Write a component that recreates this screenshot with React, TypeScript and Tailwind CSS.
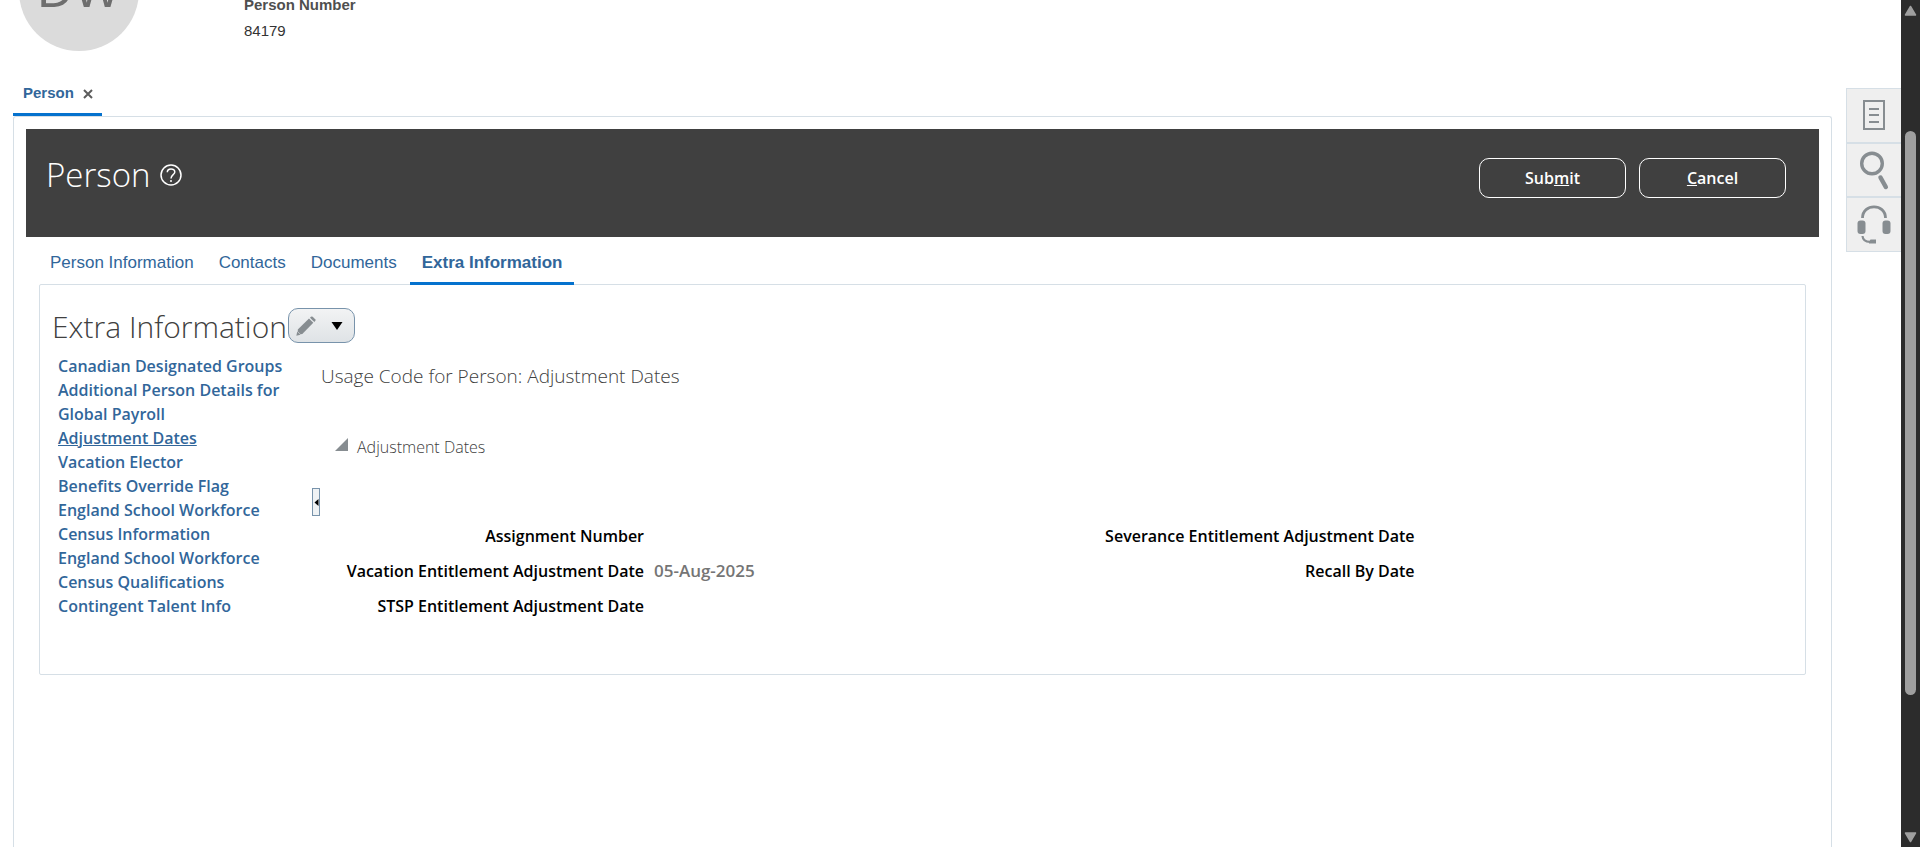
import { useState } from "react";
import type { ReactNode } from "react";

const sections = [
  "Canadian Designated Groups",
  "Additional Person Details for Global Payroll",
  "Adjustment Dates",
  "Vacation Elector",
  "Benefits Override Flag",
  "England School Workforce Census Information",
  "England School Workforce Census Qualifications",
  "Contingent Talent Info",
];

const tabs = ["Person Information", "Contacts", "Documents", "Extra Information"];

function Field({ label, value = "" }: { label: string; value?: string }) {
  return (
    <div className="grid h-[35px] grid-cols-[323px_1fr] items-center">
      <dt className="text-right font-semibold whitespace-nowrap text-black">{label}</dt>
      <dd className="pl-[10px] text-[17px] leading-[24px] font-semibold text-[#757575]">{value}</dd>
    </div>
  );
}

function HeaderButton({ children }: { children: ReactNode }) {
  return (
    <button
      type="button"
      className="h-10 w-[147px] rounded-[10px] border border-white text-[16px] font-semibold text-white"
    >
      {children}
    </button>
  );
}

function SideTab({ label, children }: { label: string; children: ReactNode }) {
  return (
    <button
      type="button"
      aria-label={label}
      className="flex h-[54px] w-[55px] items-center justify-center border-t-2 border-l border-[#d6dfe6] bg-[#efefef] first:border-t last:h-14 last:border-b"
    >
      {children}
    </button>
  );
}

function SideRail() {
  return (
    <aside className="w-[55px] shrink-0 pt-[88px]">
      <div>
        <SideTab label="Notes">
          <svg width="34" height="42" viewBox="0 0 34 42" fill="none" stroke="#878d91" strokeWidth="2">
            <path d="M7 6h20v28H7z" />
            <path d="M12 14h10M12 20h10M12 27h10" />
          </svg>
        </SideTab>
        <SideTab label="Search">
          <svg width="34" height="42" viewBox="0 0 34 42" fill="none" stroke="#878d91">
            <circle cx="15" cy="14.500" r="10.300" strokeWidth="3.400" />
            <path d="M23.500 28.500l5.300 9.500" strokeWidth="4.500" strokeLinecap="round" />
          </svg>
        </SideTab>
        <SideTab label="Support">
          <svg width="34" height="42" viewBox="0 0 34 42" fill="none" stroke="#878d91">
            <path d="M5.500 14C5.500 -0.900 28.500 -0.900 28.500 14" strokeWidth="2.800" />
            <rect x="0.500" y="16.500" width="8" height="13.500" rx="3" fill="#878d91" stroke="none" />
            <rect x="25.500" y="16.500" width="8" height="13.500" rx="3" fill="#878d91" stroke="none" />
            <path d="M5.500 32c0.300 4 3 5.800 7.500 5.800" strokeWidth="2.200" />
            <path d="M13.500 35.500h5.500v4h-7q0-2.500 1.500-4z" fill="#878d91" stroke="none" />
          </svg>
        </SideTab>
      </div>
    </aside>
  );
}

function ScrollTrack() {
  return (
    <div aria-hidden="true" className="flex w-[19px] shrink-0 flex-col items-center bg-[#2c2c2c] pt-[5px] pb-[4px]">
      <svg width="13" height="11" viewBox="0 0 13 11">
        <path d="M6.500 1.500l5 8.500h-10z" fill="#9f9f9f" stroke="#9f9f9f" strokeWidth="1.500" strokeLinejoin="round" />
      </svg>
      <div className="h-[115px]" />
      <div className="h-[564px] w-[11px] rounded-full bg-[#9f9f9f]" />
      <svg className="mt-auto" width="13" height="11" viewBox="0 0 13 11">
        <path d="M6.500 9.500l5 -8.500h-10z" fill="#9f9f9f" stroke="#9f9f9f" strokeWidth="1.500" strokeLinejoin="round" />
      </svg>
    </div>
  );
}

export default function App() {
  const [active, setActive] = useState("Extra Information");
  const [section, setSection] = useState("Adjustment Dates");

  return (
    <div className="flex h-screen overflow-hidden bg-white font-['Open_Sans',sans-serif] text-[16px] text-[#404040]">
      <div className="flex min-w-0 flex-1 flex-col pl-[13px]">
        <header className="flex h-[77px] items-start pl-[6px] font-['Liberation_Sans',Arial,sans-serif] text-[15px]">
          <div className="-mt-[69px] flex size-[120px] shrink-0 items-center justify-center rounded-full bg-[#dbdbdb] pb-[2px] text-[50px] text-[#6e6e6e]">
            DW
          </div>
          <dl className="-mt-2 ml-[105px] leading-[26px]">
            <dt className="font-bold text-[#4f4f4f]">Person Number</dt>
            <dd className="text-[#333]">84179</dd>
          </dl>
        </header>

        <div className="flex h-[39px] w-[89px] items-start gap-[9px] border-b-[3px] border-[#0572ce] pt-[4px] pl-[10px] font-['Liberation_Sans',Arial,sans-serif]">
          <a href="#person" className="text-[15px] leading-[24px] font-bold text-[#31669a]">
            Person
          </a>
          <button type="button" aria-label="Close Person tab" className="flex h-[25px] items-center">
            <svg width="10" height="10" viewBox="0 0 10 10" stroke="#5c5c5c" strokeWidth="2">
              <path d="M1 1l8 8M9 1l-8 8" />
            </svg>
          </button>
        </div>

        <main className="mr-[14px] flex-1 rounded-t-[3px] border border-b-0 border-[#d6dfe6] px-3 pt-3">
          <div className="flex h-[108px] items-start justify-between bg-[#404040] pr-[33px] pl-5 text-white">
            <div className="flex items-center gap-[10px] pt-[22px]">
              <h1 className="text-[33px] leading-[48px] font-light">Person</h1>
              <button type="button" aria-label="Help">
                <svg width="22" height="22" viewBox="0 0 22 22" fill="none" stroke="#fff" strokeWidth="1.500">
                  <circle cx="11" cy="11" r="10" />
                  <path d="M7.300 8.300C7.300 3.800 14.800 3.900 14.800 8C14.800 10.800 11 10.600 11 14.600" />
                  <path d="M11 16v2" />
                </svg>
              </button>
            </div>
            <div className="flex gap-[13px] pt-[29px]">
              <HeaderButton>
                Sub<span className="underline">m</span>it
              </HeaderButton>
              <HeaderButton>
                <span className="underline">C</span>ancel
              </HeaderButton>
            </div>
          </div>

          <nav className="flex h-[47px] gap-px pl-[12px] font-['Liberation_Sans',Arial,sans-serif] text-[17px]">
            {tabs.map((tab) => (
              <button
                key={tab}
                type="button"
                onClick={() => setActive(tab)}
                className={
                  tab === active
                    ? "z-10 h-12 border-b-[3px] border-[#0572ce] px-3 pt-[7px] font-bold text-[#31669a]"
                    : "z-10 h-12 border-b-[3px] border-transparent px-3 pt-[7px] text-[#31669a]"
                }
              >
                {tab}
              </button>
            ))}
          </nav>

          <section className="mx-[13px] h-[391px] rounded-[2px] border border-[#d6dfe6] px-3 pt-5">
            <div className="flex h-[41px] items-center gap-px">
              <h2 className="pt-[2px] text-[30px] leading-[40px] font-light whitespace-nowrap">Extra Information</h2>
              <button
                type="button"
                aria-label="Edit"
                className="flex h-[35px] w-[67px] items-center gap-[15px] rounded-[10px] border border-[#7893ab] bg-linear-to-b from-[#f2f3f4] to-[#dfe3e6] pl-[7px]"
              >
                <svg width="20" height="20" viewBox="0 0 20 20" fill="#878d91">
                  <path d="M1.800 13.500L13 2.500l4.300 4.300L6.300 18L4.500 18.200L1.800 15.500z" />
                  <path d="M1.300 15.500l3.200 3.200L0.300 19.800z" />
                  <path d="M14 1.700l0.900-0.900q0.800-0.800 1.800 0l2.500 2.500q0.800 0.900 0 1.800l-0.900 0.900z" />
                </svg>
                <svg width="12" height="8" viewBox="0 0 12 8">
                  <path d="M0.500 0h11L6 8z" fill="#000" />
                </svg>
              </button>
            </div>

            <div className="flex pt-2">
              <ul className="w-[243px] shrink-0 pl-[6px] leading-[24px] font-semibold">
                {sections.map((name) => (
                  <li key={name}>
                    <a
                      href="#section"
                      onClick={() => setSection(name)}
                      className={name === section ? "text-[#31669a] underline" : "text-[#31669a]"}
                    >
                      {name}
                    </a>
                  </li>
                ))}
              </ul>
              <div className="flex w-[25px] shrink-0 justify-end pt-[134px]">
                <button
                  type="button"
                  aria-label="Collapse list"
                  className="flex h-7 w-2 items-center justify-end border border-[#7893ab] bg-[#eff2f4]"
                >
                  <svg width="5" height="7" viewBox="0 0 5 7">
                    <path d="M4.500 0v7L0.500 3.500z" fill="#000" />
                  </svg>
                </button>
              </div>
              <div className="min-w-0 flex-1 pt-2 pl-px">
                <h3 className="text-[19px] leading-[28px] font-light">Usage Code for Person: Adjustment Dates</h3>
                <h4 className="mt-[43px] flex items-center gap-[9px] pl-[14px] leading-[28px] font-light">
                  <svg className="mb-[6px]" width="13" height="13" viewBox="0 0 13 13">
                    <path d="M13 0v13H0z" fill="#878d91" />
                  </svg>
                  Adjustment Dates
                </h4>
                <dl className="mt-[57px] grid grid-cols-[769fr_700fr]">
                  <Field label="Assignment Number" />
                  <Field label="Severance Entitlement Adjustment Date" />
                  <Field label="Vacation Entitlement Adjustment Date" value="05-Aug-2025" />
                  <Field label="Recall By Date" />
                  <Field label="STSP Entitlement Adjustment Date" />
                </dl>
              </div>
            </div>
          </section>
        </main>
      </div>
      <SideRail />
      <ScrollTrack />
    </div>
  );
}
